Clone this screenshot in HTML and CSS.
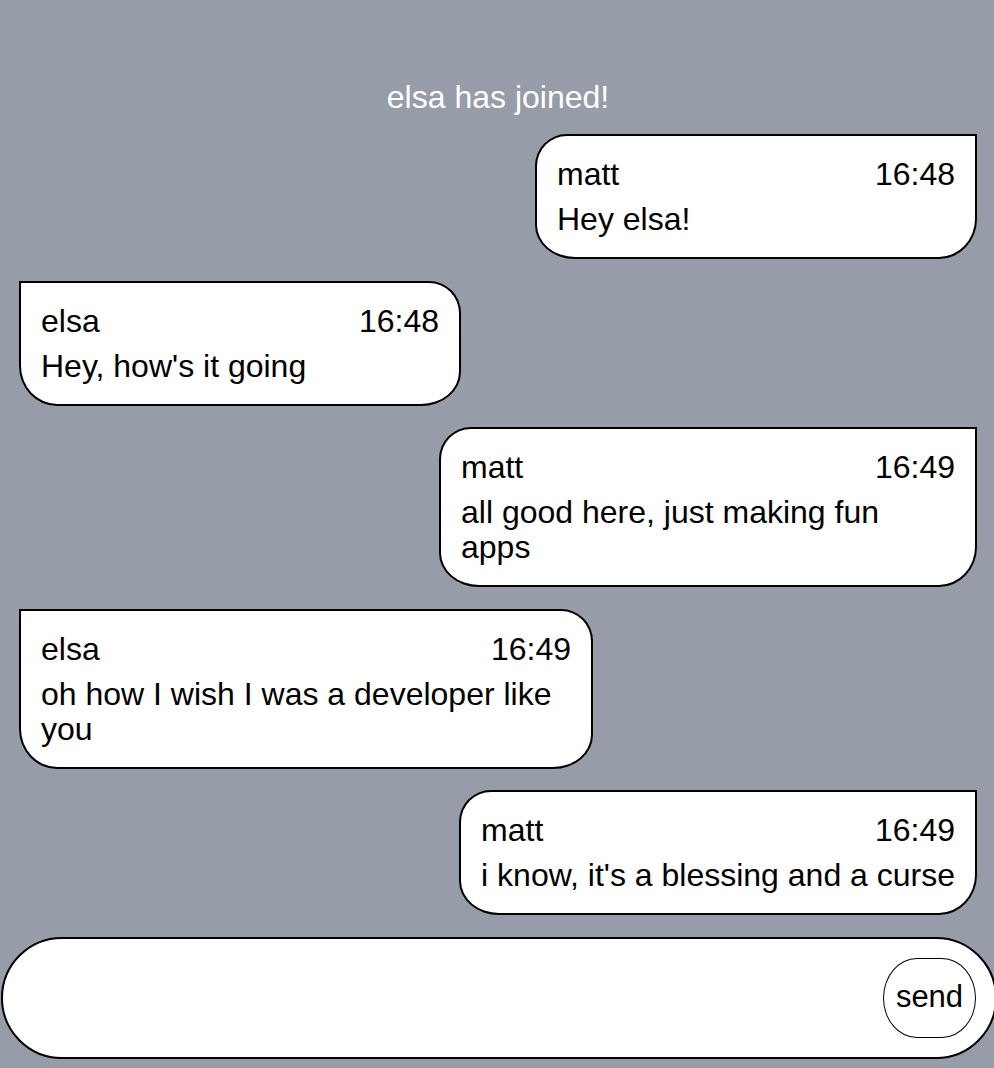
FILE: index.html
```html
<!DOCTYPE html>
<html lang="en">
<head>
<meta charset="utf-8">
<title>Chat</title>
<link rel="stylesheet" href="styles.css">
</head>
<body>
<main class="chat">
  <section class="messages">
    <p class="notice">elsa has joined!</p>
    <div class="msg msg--me">
      <div class="msg__head"><span class="msg__name">matt</span><span class="msg__time">16:48</span></div>
      <div class="msg__text">Hey elsa!</div>
    </div>
    <div class="msg msg--them">
      <div class="msg__head"><span class="msg__name">elsa</span><span class="msg__time">16:48</span></div>
      <div class="msg__text">Hey, how's it going</div>
    </div>
    <div class="msg msg--me msg--w538">
      <div class="msg__head"><span class="msg__name">matt</span><span class="msg__time">16:49</span></div>
      <div class="msg__text">all good here, just making fun apps</div>
    </div>
    <div class="msg msg--them msg--w574">
      <div class="msg__head"><span class="msg__name">elsa</span><span class="msg__time">16:49</span></div>
      <div class="msg__text">oh how I wish I was a developer like you</div>
    </div>
    <div class="msg msg--me">
      <div class="msg__head"><span class="msg__name">matt</span><span class="msg__time">16:49</span></div>
      <div class="msg__text">i know, it's a blessing and a curse</div>
    </div>
  </section>
  <form class="composer" onsubmit="return false">
    <input class="composer__input" type="text" aria-label="message">
    <button class="composer__send" type="submit">send</button>
  </form>
</main>
</body>
</html>
```

FILE: styles.css
```css
html, body {
  margin: 0;
  padding: 0;
}

body {
  background: #979ca9;
  font-family: "Liberation Sans", Arial, Helvetica, sans-serif;
  font-size: 32px;
  line-height: 35px;
  color: #000;
  overflow: hidden;
  height: 1068px;
}

.chat {
  display: flex;
  flex-direction: column;
}

.messages {
  display: flex;
  flex-direction: column;
  gap: 21.5px;
  padding: 80px 17px 0 19px;
}

.notice {
  margin: 0 0 -2.5px;
  text-align: center;
  color: #fff;
}

.msg {
  box-sizing: border-box;
  min-width: 442px;
  background: #fff;
  border: 2px solid #000;
  padding: 21px 20px 20px;
}

.msg--me {
  align-self: flex-end;
  border-radius: 32px 0 38px 40px / 32px 0 40px 34px;
}

.msg--them {
  align-self: flex-start;
  border-radius: 0 32px 40px 38px / 0 32px 34px 40px;
}

.msg--w538 {
  width: 538px;
}

.msg--w574 {
  width: 574px;
}

.msg__head {
  display: flex;
  justify-content: space-between;
  margin-bottom: 10px;
}

.composer {
  box-sizing: border-box;
  display: flex;
  align-items: center;
  width: 996px;
  height: 122px;
  margin: 21.5px 0 0 1px;
  padding: 0 19px 0 30px;
  background: #fff;
  border: 2px solid #000;
  border-radius: 61px;
}

.composer__input {
  flex: 1;
  border: none;
  outline: none;
  background: transparent;
  font: inherit;
  min-width: 0;
}

.composer__send {
  box-sizing: border-box;
  width: 93px;
  height: 80px;
  padding: 0 0 2px;
  background: #fff;
  border: 1.5px solid #000;
  border-radius: 34px / 40px;
  font-family: "Liberation Sans", Arial, Helvetica, sans-serif;
  font-size: 31px;
  color: #000;
  cursor: pointer;
}
```
